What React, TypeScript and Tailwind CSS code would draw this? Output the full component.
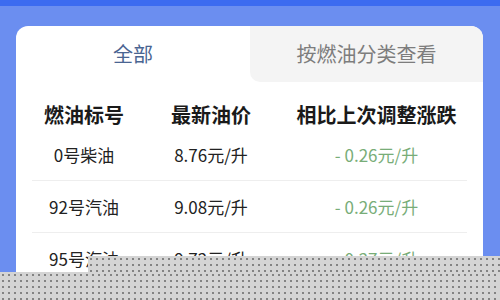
import React from "react";

const ROWS = [
  { name: "0号柴油", price: "8.76元/升", change: "- 0.26元/升" },
  { name: "92号汽油", price: "9.08元/升", change: "- 0.26元/升" },
  { name: "95号汽油", price: "9.72元/升", change: "- 0.27元/升" },
];

const FONT = "font-['Noto_Sans_CJK_SC','Noto_Sans',sans-serif]";

export default function App() {
  return (
    <div className={`relative w-[500px] h-[300px] overflow-hidden bg-[#6b8ef0] ${FONT}`}>
      {/* top bar */}
      <div className="h-[6px] bg-[#3c6bf0]" />

      {/* card */}
      <div className="mt-[20px] ml-[16px] w-[467px] h-[400px] bg-white rounded-t-[12px]">
        {/* tabs */}
        <div className="flex h-[56px]">
          <div className="w-[234px] flex items-center justify-center text-[20px] text-[#4a6592]">
            全部
          </div>
          <div className="flex-1 flex items-center justify-center bg-[#f4f4f4] rounded-tr-[12px] rounded-bl-[10px] text-[20px] text-[#7d7d7d]">
            按燃油分类查看
          </div>
        </div>

        <div className="px-[16px] pt-[19px]">
          {/* header */}
          <div className="grid grid-cols-[104px_150px_1fr] leading-[28px] text-[20px] font-bold text-[#1a1a1a]">
            <div className="text-center">燃油标号</div>
            <div className="text-center">最新油价</div>
            <div className="text-center">相比上次调整涨跌</div>
          </div>

          {/* rows */}
          {ROWS.map((r) => (
            <div
              key={r.name}
              className="grid grid-cols-[104px_150px_1fr] pt-[14px] pb-[13px] leading-[24px] text-[17px] border-b border-[#eeeeee]"
            >
              <div className="text-center text-[#222222]">{r.name}</div>
              <div className="text-center text-[#222222]">{r.price}</div>
              <div className="text-center text-[#78ad78]">{r.change}</div>
            </div>
          ))}
        </div>
      </div>

      {/* dotted overlay at the bottom */}
      <div className="absolute left-[88px] right-0 top-[256px] bottom-0 bg-[#d4d4d4] bg-[radial-gradient(circle,#555555_0.6px,transparent_0.9px)] bg-[length:6px_6px]" />
      <div className="absolute left-0 right-0 top-[272px] bottom-0 bg-[#d4d4d4] bg-[radial-gradient(circle,#555555_0.6px,transparent_0.9px)] bg-[length:6px_6px]" />
    </div>
  );
}
